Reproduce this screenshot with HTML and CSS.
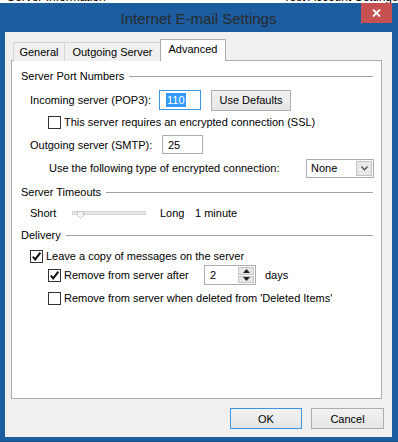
FILE: index.html
```html
<!DOCTYPE html>
<html lang="en">

<head>
    <meta charset="UTF-8">
    <title>Internet E-mail Settings</title>
    <link rel="stylesheet" href="styles.css">
</head>

<body>
    <!-- window behind the dialog, only its bottom edge shows -->
    <div class="behind">
        <span>Server Information</span>
        <span>Test Account Settings</span>
    </div>

    <div class="window">
        <div class="titlebar">
            <div></div>
            <div class="title">Internet E-mail Settings</div>
            <div class="close">
                <svg width="9" height="8" viewBox="0 0 9 8">
                    <path d="M1 0.5 L8 7.5 M8 0.5 L1 7.5" stroke="#fff" stroke-width="1.8" fill="none" />
                </svg>
            </div>
        </div>

        <div class="client">
            <div class="tabs">
                <div class="tab tab-general">General</div>
                <div class="tab tab-outgoing">Outgoing Server</div>
                <div class="tab tab-active">Advanced</div>
            </div>

            <div class="panel">
                <div class="group-title"><span>Server Port Numbers</span><i class="rule"></i></div>

                <div class="row row-incoming lvl1">
                    <span class="label-in">Incoming server (POP3):</span>
                    <div class="input input-focus"><span class="sel">110</span></div>
                    <button class="btn btn-defaults">Use Defaults</button>
                </div>

                <div class="row row-ssl lvl2">
                    <span class="check"></span>
                    <span>This server requires an encrypted connection (SSL)</span>
                </div>

                <div class="row row-outgoing lvl1">
                    <span class="label-out">Outgoing server (SMTP):</span>
                    <div class="input input-small">25</div>
                </div>

                <div class="row row-enc lvl2b">
                    <span>Use the following type of encrypted connection:</span>
                    <div class="select">
                        <span>None</span>
                        <span class="select-arrow">
                            <svg width="7" height="5" viewBox="0 0 7 5">
                                <path d="M0.5 0.5 L3.5 3.8 L6.5 0.5" stroke="#444" stroke-width="1.2" fill="none" />
                            </svg>
                        </span>
                    </div>
                </div>

                <div class="group-title group-timeouts"><span>Server Timeouts</span><i class="rule"></i></div>

                <div class="row row-slider lvl1">
                    <span class="label-short">Short</span>
                    <svg class="slider" width="74" height="9" viewBox="0 0 74 9">
                        <rect x="0.5" y="0.5" width="73" height="3" fill="#e7e7e7" stroke="#d4d4d4" />
                        <path d="M5.5 0.5 H11.5 V4.5 L8.5 7.5 L5.5 4.5 Z" fill="#f4f4f4" stroke="#c4c4c4" />
                    </svg>
                    <span class="label-long">Long</span>
                    <span>1 minute</span>
                </div>

                <div class="group-title group-delivery"><span>Delivery</span><i class="rule"></i></div>

                <div class="row row-leave lvl1">
                    <span class="check">
                        <svg width="11" height="11" viewBox="0 0 11 11">
                            <path d="M1.8 5.6 L4.2 8.4 L9.4 1.6" stroke="#111" stroke-width="2" fill="none" />
                        </svg>
                    </span>
                    <span>Leave a copy of messages on the server</span>
                </div>

                <div class="row row-after lvl2">
                    <span class="check">
                        <svg width="11" height="11" viewBox="0 0 11 11">
                            <path d="M1.8 5.6 L4.2 8.4 L9.4 1.6" stroke="#111" stroke-width="2" fill="none" />
                        </svg>
                    </span>
                    <span class="label-after">Remove from server after</span>
                    <div class="spin">
                        <span class="spin-value">2</span>
                        <div class="spin-btns">
                            <span class="spin-btn">
                                <svg width="7" height="4" viewBox="0 0 7 4"><path d="M0 4 L3.5 0 L7 4 Z" fill="#222" /></svg>
                            </span>
                            <span class="spin-btn">
                                <svg width="7" height="4" viewBox="0 0 7 4"><path d="M0 0 L3.5 4 L7 0 Z" fill="#222" /></svg>
                            </span>
                        </div>
                    </div>
                    <span class="days">days</span>
                </div>

                <div class="row row-deleted lvl2">
                    <span class="check"></span>
                    <span>Remove from server when deleted from 'Deleted Items'</span>
                </div>
            </div>

            <div class="actions">
                <button class="btn btn-ok">OK</button>
                <button class="btn btn-cancel">Cancel</button>
            </div>
        </div>
    </div>
</body>

</html>
```

FILE: styles.css
```css
* {
    margin: 0;
    padding: 0;
    box-sizing: border-box;
}

body {
    width: 398px;
    height: 442px;
    overflow: hidden;
    background: #fff;
    font-family: 'Liberation Sans', Arial, sans-serif;
    font-size: 11px;
    color: #000;
}

.behind {
    height: 3px;
    overflow: hidden;
    display: flex;
    justify-content: space-between;
    padding: 0 0 0 7px;
    line-height: 11px;
    font-size: 12px;
}

.behind span {
    margin-top: -8px;
    white-space: nowrap;
}

.window {
    height: 439px;
    background: #1c5d9f;
    border-bottom: 1px solid #174f89;
    padding: 0 6px 4px 5px;
    display: flex;
    flex-direction: column;
}

.titlebar {
    height: 29px;
    display: grid;
    grid-template-columns: 1fr auto 1fr;
}

.title {
    font-size: 15px;
    color: #2a2a2a;
    padding-top: 7px;
    white-space: nowrap;
}

.close {
    justify-self: end;
    width: 31px;
    height: 20px;
    background: #c75050;
    display: flex;
    align-items: center;
    justify-content: center;
}

.client {
    flex: 1;
    background: #f0f0f0;
    padding: 7px 9px 0 6px;
}

/* tabs */
.tabs {
    display: flex;
    align-items: flex-end;
    height: 22px;
    margin: 0 0 -1px 2px;
    position: relative;
    z-index: 1;
}

.tab {
    height: 19px;
    border: 1px solid #d5d5d5;
    border-bottom: none;
    background: #f0f0f0;
    text-align: center;
    line-height: 18px;
    white-space: nowrap;
}

.tab-general {
    width: 52px;
}

.tab-outgoing {
    width: 97px;
    margin-left: -1px;
}

.tab-active {
    width: 66px;
    height: 22px;
    margin-left: -1px;
    background: #fff;
    border-color: #acacac;
    line-height: 19px;
}

.panel {
    height: 339px;
    margin-right: 1px;
    background: #fff;
    border: 1px solid #acacac;
    padding: 3px 7px 0 9px;
}

/* group headers */
.group-title {
    height: 24px;
    display: flex;
    align-items: center;
}

.group-title .rule {
    flex: 1;
    height: 1px;
    margin: 1px 1px 0 5px;
    background: #a0a0a0;
}

.group-delivery {
    height: 25px;
}

.row {
    display: flex;
    align-items: center;
    white-space: nowrap;
}

.lvl1 {
    padding-left: 9px;
}

.lvl2 {
    padding-left: 27px;
}

.lvl2b {
    padding-left: 28px;
}

.row-incoming {
    height: 23px;
}

.row-ssl {
    height: 22px;
}

.row-outgoing {
    height: 23px;
}

.row-enc {
    height: 24px;
}

.row-slider {
    height: 18px;
}

.row-leave {
    height: 18px;
}

.row-after {
    height: 20px;
}

.row-deleted {
    height: 26px;
}

.label-in {
    width: 129px;
}

.label-out {
    width: 132px;
}

.input {
    height: 20px;
    border: 1px solid #abadb3;
    background: #fff;
    display: flex;
    align-items: center;
    padding-left: 5px;
}

.input-focus {
    width: 42px;
    border-color: #3d95e8;
    padding-left: 6px;
}

.input-small {
    width: 41px;
    height: 19px;
}

.sel {
    background: #3399ff;
    color: #fff;
    padding: 1px 1px;
    line-height: 12px;
}

/* buttons */
.btn {
    font-family: inherit;
    font-size: 11px;
    color: #000;
    height: 21px;
    border: 1px solid #adadad;
    background: linear-gradient(#f2f2f2, #e5e5e5);
}

.btn-defaults {
    width: 80px;
    margin-left: 10px;
    margin-top: 1px;
}

.check {
    width: 13px;
    height: 13px;
    border: 1px solid #333;
    background: #fff;
    margin-right: 3px;
    display: flex;
    align-items: center;
    justify-content: center;
}

/* dropdown */
.select {
    margin-left: auto;
    width: 68px;
    height: 19px;
    border: 1px solid #acacac;
    background: #fff;
    display: flex;
    align-items: center;
    justify-content: space-between;
    padding: 0 1px 0 4px;
}

.select-arrow {
    width: 16px;
    height: 15px;
    background: #e8e8e8;
    border: 1px solid #c2c2c2;
    display: flex;
    align-items: center;
    justify-content: center;
}

/* slider */
.label-short {
    width: 42px;
}

.slider {
    margin-top: 4px;
}

.label-long {
    width: 35px;
    margin-left: 14px;
}

/* spin box */
.label-after {
    width: 140px;
}

.spin {
    width: 52px;
    height: 20px;
    border: 1px solid #acacac;
    background: #fff;
    display: flex;
    justify-content: space-between;
    align-items: stretch;
}

.spin-value {
    padding: 3px 0 0 5px;
}

.spin-btns {
    width: 17px;
    display: flex;
    flex-direction: column;
    padding: 1px 1px 1px 0;
    gap: 1px;
}

.spin-btn {
    flex: 1;
    background: #e6e6e6;
    border: 1px solid #c6c6c6;
    display: flex;
    align-items: center;
    justify-content: center;
}

.days {
    margin-left: 9px;
}

/* bottom buttons */
.actions {
    display: flex;
    justify-content: flex-end;
    gap: 9px;
    margin: 9px -1px 0 0;
}

.btn-ok {
    width: 72px;
    border-color: #3d95e8;
}

.btn-cancel {
    width: 73px;
}
```
